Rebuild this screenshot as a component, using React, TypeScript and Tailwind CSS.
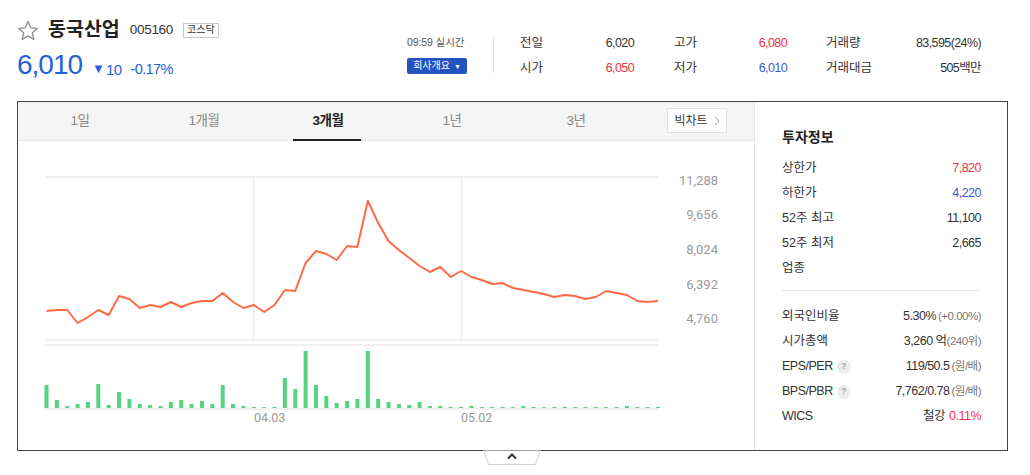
import React from "react";

const priceY = [
  311, 310, 310, 323, 317, 310, 315, 296, 299, 308,
  305, 307, 302, 307, 303, 301, 301, 293, 302, 308,
  305, 312, 305, 290, 291, 263, 251, 254, 260, 246,
  247, 201, 223, 241, 250, 258, 266, 272, 267, 277,
  271, 277, 280, 284, 283, 288, 290, 292, 294, 297,
  295, 296, 299, 297, 291, 293, 295, 301, 302, 301,
];

const vol = [
  23, 8, 2, 4, 6, 24, 3, 16, 9, 4,
  3, 2, 6, 8, 4, 7, 4, 23, 4, 2,
  1, 1, 1, 30, 19, 57, 23, 12, 5, 7,
  9, 57, 9, 6, 4, 3, 6, 2, 2, 1,
  1, 2, 1, 1, 1, 1, 2, 1, 1, 1,
  1, 1, 1, 1, 1, 1, 2, 1, 1, 1,
];

const xAt = (i: number) => 46.5 + i * (611.5 / 59);

const FONT = { fontFamily: '"Liberation Sans", "Noto Sans CJK KR", sans-serif' };

function Star() {
  return (
    <svg width="22" height="21" viewBox="0 0 24 23">
      <polygon
        points="12,1.5 14.9,8.6 22.5,9.1 16.7,14 18.5,21.4 12,17.4 5.5,21.4 7.3,14 1.5,9.1 9.1,8.6"
        fill="none"
        stroke="#8a8a8a"
        strokeWidth="1.4"
        strokeLinejoin="round"
      />
    </svg>
  );
}

function Q() {
  return (
    <span className="ml-[4px] inline-flex h-[14px] w-[14px] items-center justify-center rounded-full bg-[#ececec] text-[9px] font-bold text-[#aaa]">
      ?
    </span>
  );
}

function Chart() {
  const pts = priceY.map((y, i) => `${xAt(i).toFixed(1)},${y}`).join(" ");
  const yl: [string, number][] = [
    ["11,288", 182],
    ["9,656", 216],
    ["8,024", 251],
    ["6,392", 286],
    ["4,760", 320],
  ];
  return (
    <svg width="736" height="309" viewBox="18 141 736 309" className="block">
      <line x1="46" y1="177" x2="658" y2="177" stroke="#f0f0f0" strokeWidth="2" />
      <line x1="46" y1="340" x2="658" y2="340" stroke="#f0f0f0" strokeWidth="2" />
      <line x1="45" y1="345" x2="658" y2="345" stroke="#f0f0f0" strokeWidth="2" />
      <line x1="45" y1="409" x2="658" y2="409" stroke="#f0f0f0" strokeWidth="2" />
      <line x1="253.5" y1="177" x2="253.5" y2="340" stroke="#ededed" strokeWidth="1.5" />
      <line x1="461.5" y1="177" x2="461.5" y2="340" stroke="#ededed" strokeWidth="1.5" />
      {vol.map((h, i) => (
        <rect key={i} x={xAt(i) - 2} y={408 - h} width="4" height={h} fill="#55d37e" />
      ))}
      <polyline points={pts} fill="none" stroke="#ff6a45" strokeWidth="2" strokeLinejoin="round" />
      {yl.map(([t, y]) => (
        <text
          key={t}
          x="718"
          y={y}
          textAnchor="end"
          dominantBaseline="middle"
          fontSize="13"
          fill="#9a9a9a"
          fontFamily="Roboto, sans-serif"
        >
          {t}
        </text>
      ))}
      <text x="254" y="419" dominantBaseline="middle" fontSize="12.5" fill="#9a9a9a" fontFamily="Roboto, sans-serif">
        04.03
      </text>
      <text x="461" y="419" dominantBaseline="middle" fontSize="12.5" fill="#9a9a9a" fontFamily="Roboto, sans-serif">
        05.02
      </text>
    </svg>
  );
}

function Row({ label, children }: { label: React.ReactNode; children: React.ReactNode }) {
  return (
    <div className="flex h-[25px] items-center justify-between text-[12.5px] leading-none text-[#333]">
      <span className="flex items-center">{label}</span>
      <span className="tracking-[-0.5px]">{children}</span>
    </div>
  );
}

export default function App() {
  const tabs = ["1일", "1개월", "3개월", "1년", "3년"];
  return (
    <div className="relative h-[475px] w-[1030px] overflow-hidden bg-white" style={FONT}>
      {/* header */}
      <div className="flex h-[101px]">
        <div className="w-[390px] pl-[17px] pt-[19px]">
          <div className="flex h-[22px] items-center">
            <Star />
            <span className="ml-[9px] text-[19.5px] font-bold leading-none text-[#222]">동국산업</span>
            <span className="ml-[10px] text-[13.5px] leading-none tracking-[-0.3px] text-[#333]">005160</span>
            <span className="ml-[10px] flex h-[15px] items-center border border-[#c8c8c8] px-[3px] text-[10px] leading-none text-[#333]">
              코스닥
            </span>
          </div>
          <div className="mt-[11px] flex items-end text-[#2362d6]">
            <span className="text-[28px] leading-[26px] tracking-[-1px]">6,010</span>
            <span className="mb-[3px] ml-[10px] text-[13px] leading-none">▼</span>
            <span className="ml-[1px] text-[15px] leading-[17px] tracking-[-0.6px]">10</span>
            <span className="ml-[9px] text-[14.5px] leading-[17px] tracking-[-0.6px]">-0.17%</span>
          </div>
        </div>
        <div className="ml-[17px] w-[86px] pt-[37px]">
          <div className="text-[10.5px] leading-[11px] tracking-[-0.1px] text-[#555]">09:59 실시간</div>
          <div className="mt-[10px] flex h-[16px] w-[60px] items-center justify-center gap-[4px] rounded-[2px] bg-[#2552bf] text-[10px] leading-none text-white">
            <span>회사개요</span>
            <span className="text-[7px]">▼</span>
          </div>
        </div>
        <div className="mt-[36px] h-[37px] border-l border-[#e2e2e2]" />
        <div className="pl-[26px] pt-[31px] text-[12.5px] leading-none text-[#333]">
          <div className="flex h-[25px] items-center">
            <div className="flex w-[114px] justify-between">
              <span>전일</span>
              <span className="tracking-[-0.6px]">6,020</span>
            </div>
            <div className="ml-[40px] flex w-[113px] justify-between">
              <span>고가</span>
              <span className="tracking-[-0.6px] text-[#f2323f]">6,080</span>
            </div>
            <div className="ml-[39px] flex w-[155px] justify-between">
              <span>거래량</span>
              <span className="tracking-[-0.6px]">83,595(24%)</span>
            </div>
          </div>
          <div className="flex h-[25px] items-center">
            <div className="flex w-[114px] justify-between">
              <span>시가</span>
              <span className="tracking-[-0.6px] text-[#f2323f]">6,050</span>
            </div>
            <div className="ml-[40px] flex w-[113px] justify-between">
              <span>저가</span>
              <span className="tracking-[-0.6px] text-[#3c5ad6]">6,010</span>
            </div>
            <div className="ml-[39px] flex w-[155px] justify-between">
              <span>거래대금</span>
              <span className="tracking-[-0.6px]">505백만</span>
            </div>
          </div>
        </div>
      </div>

      {/* main box */}
      <div className="ml-[17px] flex h-[350px] w-[991px] border border-[#444]">
        <div className="flex w-[736px] flex-col">
          <div className="flex h-[39px] border-b border-[#e6e6e6] bg-[#f5f5f5]">
            {tabs.map((t) => {
              const active = t === "3개월";
              return (
                <div key={t} className="relative flex w-[124px] items-center justify-center">
                  <span
                    className={
                      active
                        ? "text-[13.5px] font-bold tracking-[-0.5px] text-[#222]"
                        : "text-[13.5px] tracking-[-0.5px] text-[#888]"
                    }
                  >
                    {t}
                  </span>
                  {active && <div className="absolute bottom-[-1px] left-[27px] h-[2px] w-[68px] bg-[#222]" />}
                </div>
              );
            })}
            <div className="ml-[29px] mt-[6px] flex h-[25px] w-[60px] items-center justify-center gap-[6px] border border-[#e0e0e0] bg-white text-[12px] leading-none text-[#333]">
              <span>빅차트</span>
              <svg width="6" height="10" viewBox="0 0 6 10">
                <polyline points="1,1 5,5 1,9" fill="none" stroke="#aaa" strokeWidth="1" />
              </svg>
            </div>
          </div>
          <Chart />
        </div>
        <div className="w-[253px] border-l border-[#e6e6e6] pl-[27px] pr-[26px] pt-[25px]">
          <div className="h-[20px] text-[14px] font-bold leading-[20px] text-[#222]">투자정보</div>
          <div className="mt-[9px]">
            <Row label="상한가">
              <span className="text-[#f2323f]">7,820</span>
            </Row>
            <Row label="하한가">
              <span className="text-[#3c5ad6]">4,220</span>
            </Row>
            <Row label="52주 최고">11,100</Row>
            <Row label="52주 최저">2,665</Row>
            <Row label="업종">{""}</Row>
          </div>
          <div className="mt-[9px] border-t border-[#e6e6e6]" />
          <div className="mt-[13px]">
            <Row label="외국인비율">
              5.30%<span className="ml-[2px] text-[11.5px] text-[#777]">(+0.00%)</span>
            </Row>
            <Row label="시가총액">
              3,260 억<span className="text-[11.5px] text-[#777]">(240위)</span>
            </Row>
            <Row
              label={
                <>
                  <span className="tracking-[-0.5px]">EPS/PER</span>
                  <Q />
                </>
              }
            >
              119/50.5<span className="ml-[2px] text-[11.5px] text-[#777]">(원/배)</span>
            </Row>
            <Row
              label={
                <>
                  <span className="tracking-[-0.5px]">BPS/PBR</span>
                  <Q />
                </>
              }
            >
              7,762/0.78<span className="ml-[2px] text-[11.5px] text-[#777]">(원/배)</span>
            </Row>
            <Row label={<span className="tracking-[-0.5px]">WICS</span>}>
              철강<span className="ml-[4px] text-[#f2323f]">0.11%</span>
            </Row>
          </div>
        </div>
      </div>

      {/* toggle tab */}
      <div className="ml-[483px] -mt-[1px]">
        <svg width="58" height="16" viewBox="0 0 58 16" className="block">
          <path d="M0.5,0.5 L5.5,14.5 L52.5,14.5 L57.5,0.5" fill="#fff" stroke="#cfcfcf" strokeWidth="1" />
          <polyline points="25,8.5 29,4.5 33,8.5" fill="none" stroke="#333" strokeWidth="2" />
        </svg>
      </div>
    </div>
  );
}
